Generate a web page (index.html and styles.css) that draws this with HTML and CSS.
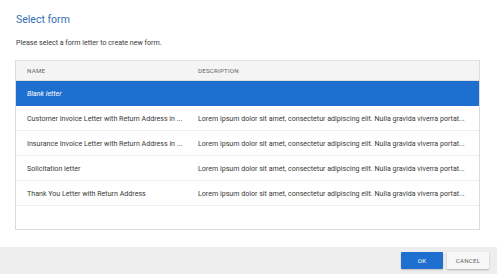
FILE: index.html
```html
<!DOCTYPE html>
<html>
<head>
<meta charset="utf-8">
<link rel="stylesheet" href="styles.css">
</head>
<body>
<div class="dialog">
  <div class="content">
    <h1 class="title">Select form</h1>
    <p class="subtitle">Please select a form letter to create new form.</p>
    <div class="table">
      <div class="row head">
        <div class="cell name">NAME</div>
        <div class="cell desc">DESCRIPTION</div>
      </div>
      <div class="row selected">
        <div class="cell name">Blank letter</div>
        <div class="cell desc"></div>
      </div>
      <div class="row">
        <div class="cell name">Customer Invoice Letter with Return Address in ...</div>
        <div class="cell desc">Lorem ipsum dolor sit amet, consectetur adipiscing elit. Nulla gravida viverra portat...</div>
      </div>
      <div class="row">
        <div class="cell name">Insurance Invoice Letter with Return Address in ...</div>
        <div class="cell desc">Lorem ipsum dolor sit amet, consectetur adipiscing elit. Nulla gravida viverra portat...</div>
      </div>
      <div class="row">
        <div class="cell name">Solicitation letter</div>
        <div class="cell desc">Lorem ipsum dolor sit amet, consectetur adipiscing elit. Nulla gravida viverra portat...</div>
      </div>
      <div class="row">
        <div class="cell name">Thank You Letter with Return Address</div>
        <div class="cell desc">Lorem ipsum dolor sit amet, consectetur adipiscing elit. Nulla gravida viverra portat...</div>
      </div>
      <div class="filler"></div>
    </div>
  </div>
  <div class="footer">
    <button class="btn ok">OK</button>
    <button class="btn cancel">CANCEL</button>
  </div>
</div>
</body>
</html>
```
FILE: styles.css
```css
html, body {
  margin: 0;
  padding: 0;
  background: #ffffff;
}
body {
  font-family: Roboto, "Liberation Sans", sans-serif;
  color: #3a3a3a;
  width: 497px;
  height: 274px;
  overflow: hidden;
}
.dialog {
  display: flex;
  flex-direction: column;
  height: 274px;
}
.content {
  padding: 13px 17px 0 15px;
  flex: 1;
}
.title {
  margin: 0 0 0 1px;
  font-size: 10.5px;
  font-weight: 400;
  color: #3470b2;
  line-height: 14px;
}
.subtitle {
  margin: 11px 0 0 1px;
  font-size: 7.1px;
  line-height: 10px;
  color: #3a3a3a;
}
.table {
  margin-top: 12px;
  border: 1px solid #dcdcdc;
  border-top-color: #e3e3e3;
}
.row {
  display: flex;
  height: 25px;
  align-items: center;
  border-bottom: 1px solid #eeeeee;
  box-sizing: border-box;
  font-size: 7.1px;
  color: #3a3a3a;
}
.row.head {
  height: 20px;
  background: #f4f4f4;
  border-bottom: 1px solid #e0e0e0;
  font-size: 6.2px;
  color: #666666;
  letter-spacing: 0.2px;
}
.row.selected {
  background: #1e6fd0;
  color: #ffffff;
  font-style: italic;
  border-bottom-color: #1e6fd0;
}
.cell {
  padding: 0 0 0 11px;
  box-sizing: border-box;
  white-space: nowrap;
  overflow: hidden;
}
.cell.name {
  width: 171px;
  flex: none;
}
.cell.desc {
  flex: 1;
  min-width: 0;
  padding-right: 8px;
}
.filler {
  height: 23px;
}
.footer {
  height: 27px;
  background: #eeeeee;
  display: flex;
  justify-content: flex-end;
  align-items: flex-start;
  padding: 5px 8px 0 0;
  box-sizing: border-box;
  gap: 4px;
}
.btn {
  font-family: Roboto, "Liberation Sans", sans-serif;
  font-size: 6.2px;
  height: 17px;
  width: 42px;
  border: none;
  border-radius: 1px;
  padding: 0;
  letter-spacing: 0.2px;
}
.btn.ok {
  background: #1e6fd0;
  color: #ffffff;
  box-shadow: 0 1px 2px rgba(0,0,0,0.2);
}
.btn.cancel {
  background: #f7f7f7;
  color: #666666;
  box-shadow: 0 1px 2px rgba(0,0,0,0.25);
}
```
